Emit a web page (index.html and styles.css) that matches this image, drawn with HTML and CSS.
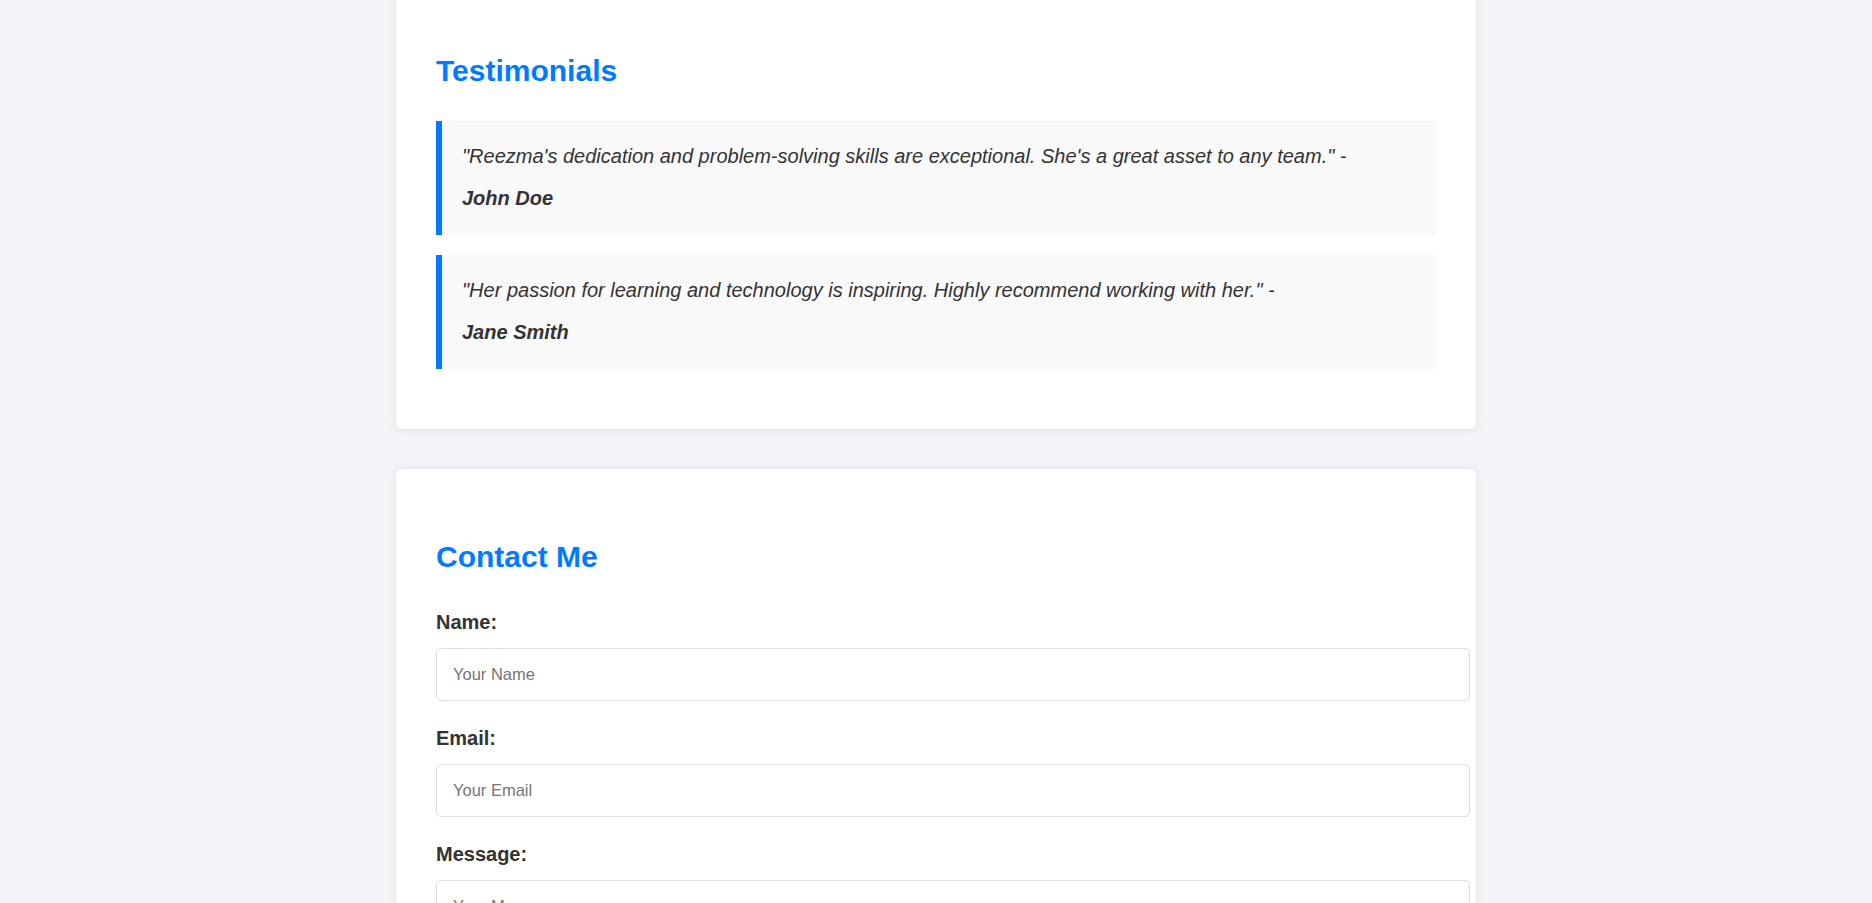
FILE: index.html
```html
<!DOCTYPE html>
<html lang="en">
<head>
<meta charset="utf-8">
<title>Testimonials &amp; Contact</title>
<link rel="stylesheet" href="styles.css">
</head>
<body>
<main class="page">
  <section class="card">
    <h2 class="card-title">Testimonials</h2>
    <blockquote class="testimonial">
      <p class="quote">"Reezma's dedication and problem-solving skills are exceptional. She's a great asset to any team." -</p>
      <cite class="author">John Doe</cite>
    </blockquote>
    <blockquote class="testimonial">
      <p class="quote">"Her passion for learning and technology is inspiring. Highly recommend working with her." -</p>
      <cite class="author">Jane Smith</cite>
    </blockquote>
  </section>

  <section class="card">
    <h2 class="card-title">Contact Me</h2>
    <form class="contact-form">
      <label class="field-label" for="name">Name:</label>
      <input class="field-input" id="name" type="text" placeholder="Your Name">
      <label class="field-label" for="email">Email:</label>
      <input class="field-input" id="email" type="email" placeholder="Your Email">
      <label class="field-label" for="message">Message:</label>
      <textarea class="field-input field-textarea" id="message" rows="5" placeholder="Your Message"></textarea>
    </form>
  </section>
</main>
</body>
</html>
```

FILE: styles.css
```css
html, body {
  margin: 0;
  padding: 0;
}

body {
  background: #f4f4f9;
  color: #333;
  font-family: "Liberation Sans", Arial, sans-serif;
  font-size: 20px;
}

.page {
  width: 1080px;
  margin: -17px auto 0;
}

.card {
  background: #fff;
  border-radius: 6px;
  box-shadow: 0 0 10px rgba(0, 0, 0, 0.1);
  padding: 40px;
  margin-bottom: 40px;
}

.card-title {
  margin: 31px 0 33px;
  font-size: 30px;
  line-height: 34px;
  font-weight: bold;
  color: #007bff;
}

.testimonial {
  margin: 0 0 20px;
  padding: 20px 20px 21px;
  background: #f9f9f9;
  border-left: 6px solid #007bff;
  font-style: italic;
}

.quote {
  margin: 0;
  font-size: 20px;
  line-height: 31px;
}

.author {
  display: block;
  margin-top: 11px;
  font-size: 20px;
  line-height: 31px;
  font-style: italic;
  font-weight: bold;
}

.contact-form {
  padding-top: 4px;
}

.field-label {
  display: block;
  font-size: 20px;
  line-height: 23px;
  font-weight: bold;
  margin-bottom: 14px;
}

.field-input {
  display: block;
  width: 100%;
  box-sizing: content-box;
  padding: 16px;
  margin: 0 0 26px;
  border: 1px solid #ddd;
  border-radius: 5px;
  background: #fff;
  font-family: "Liberation Sans", Arial, sans-serif;
  font-size: 16.5px;
  line-height: 19px;
  color: #333;
}

.field-input::placeholder {
  color: #757575;
}

.field-textarea {
  height: 120px;
  resize: vertical;
}
```
